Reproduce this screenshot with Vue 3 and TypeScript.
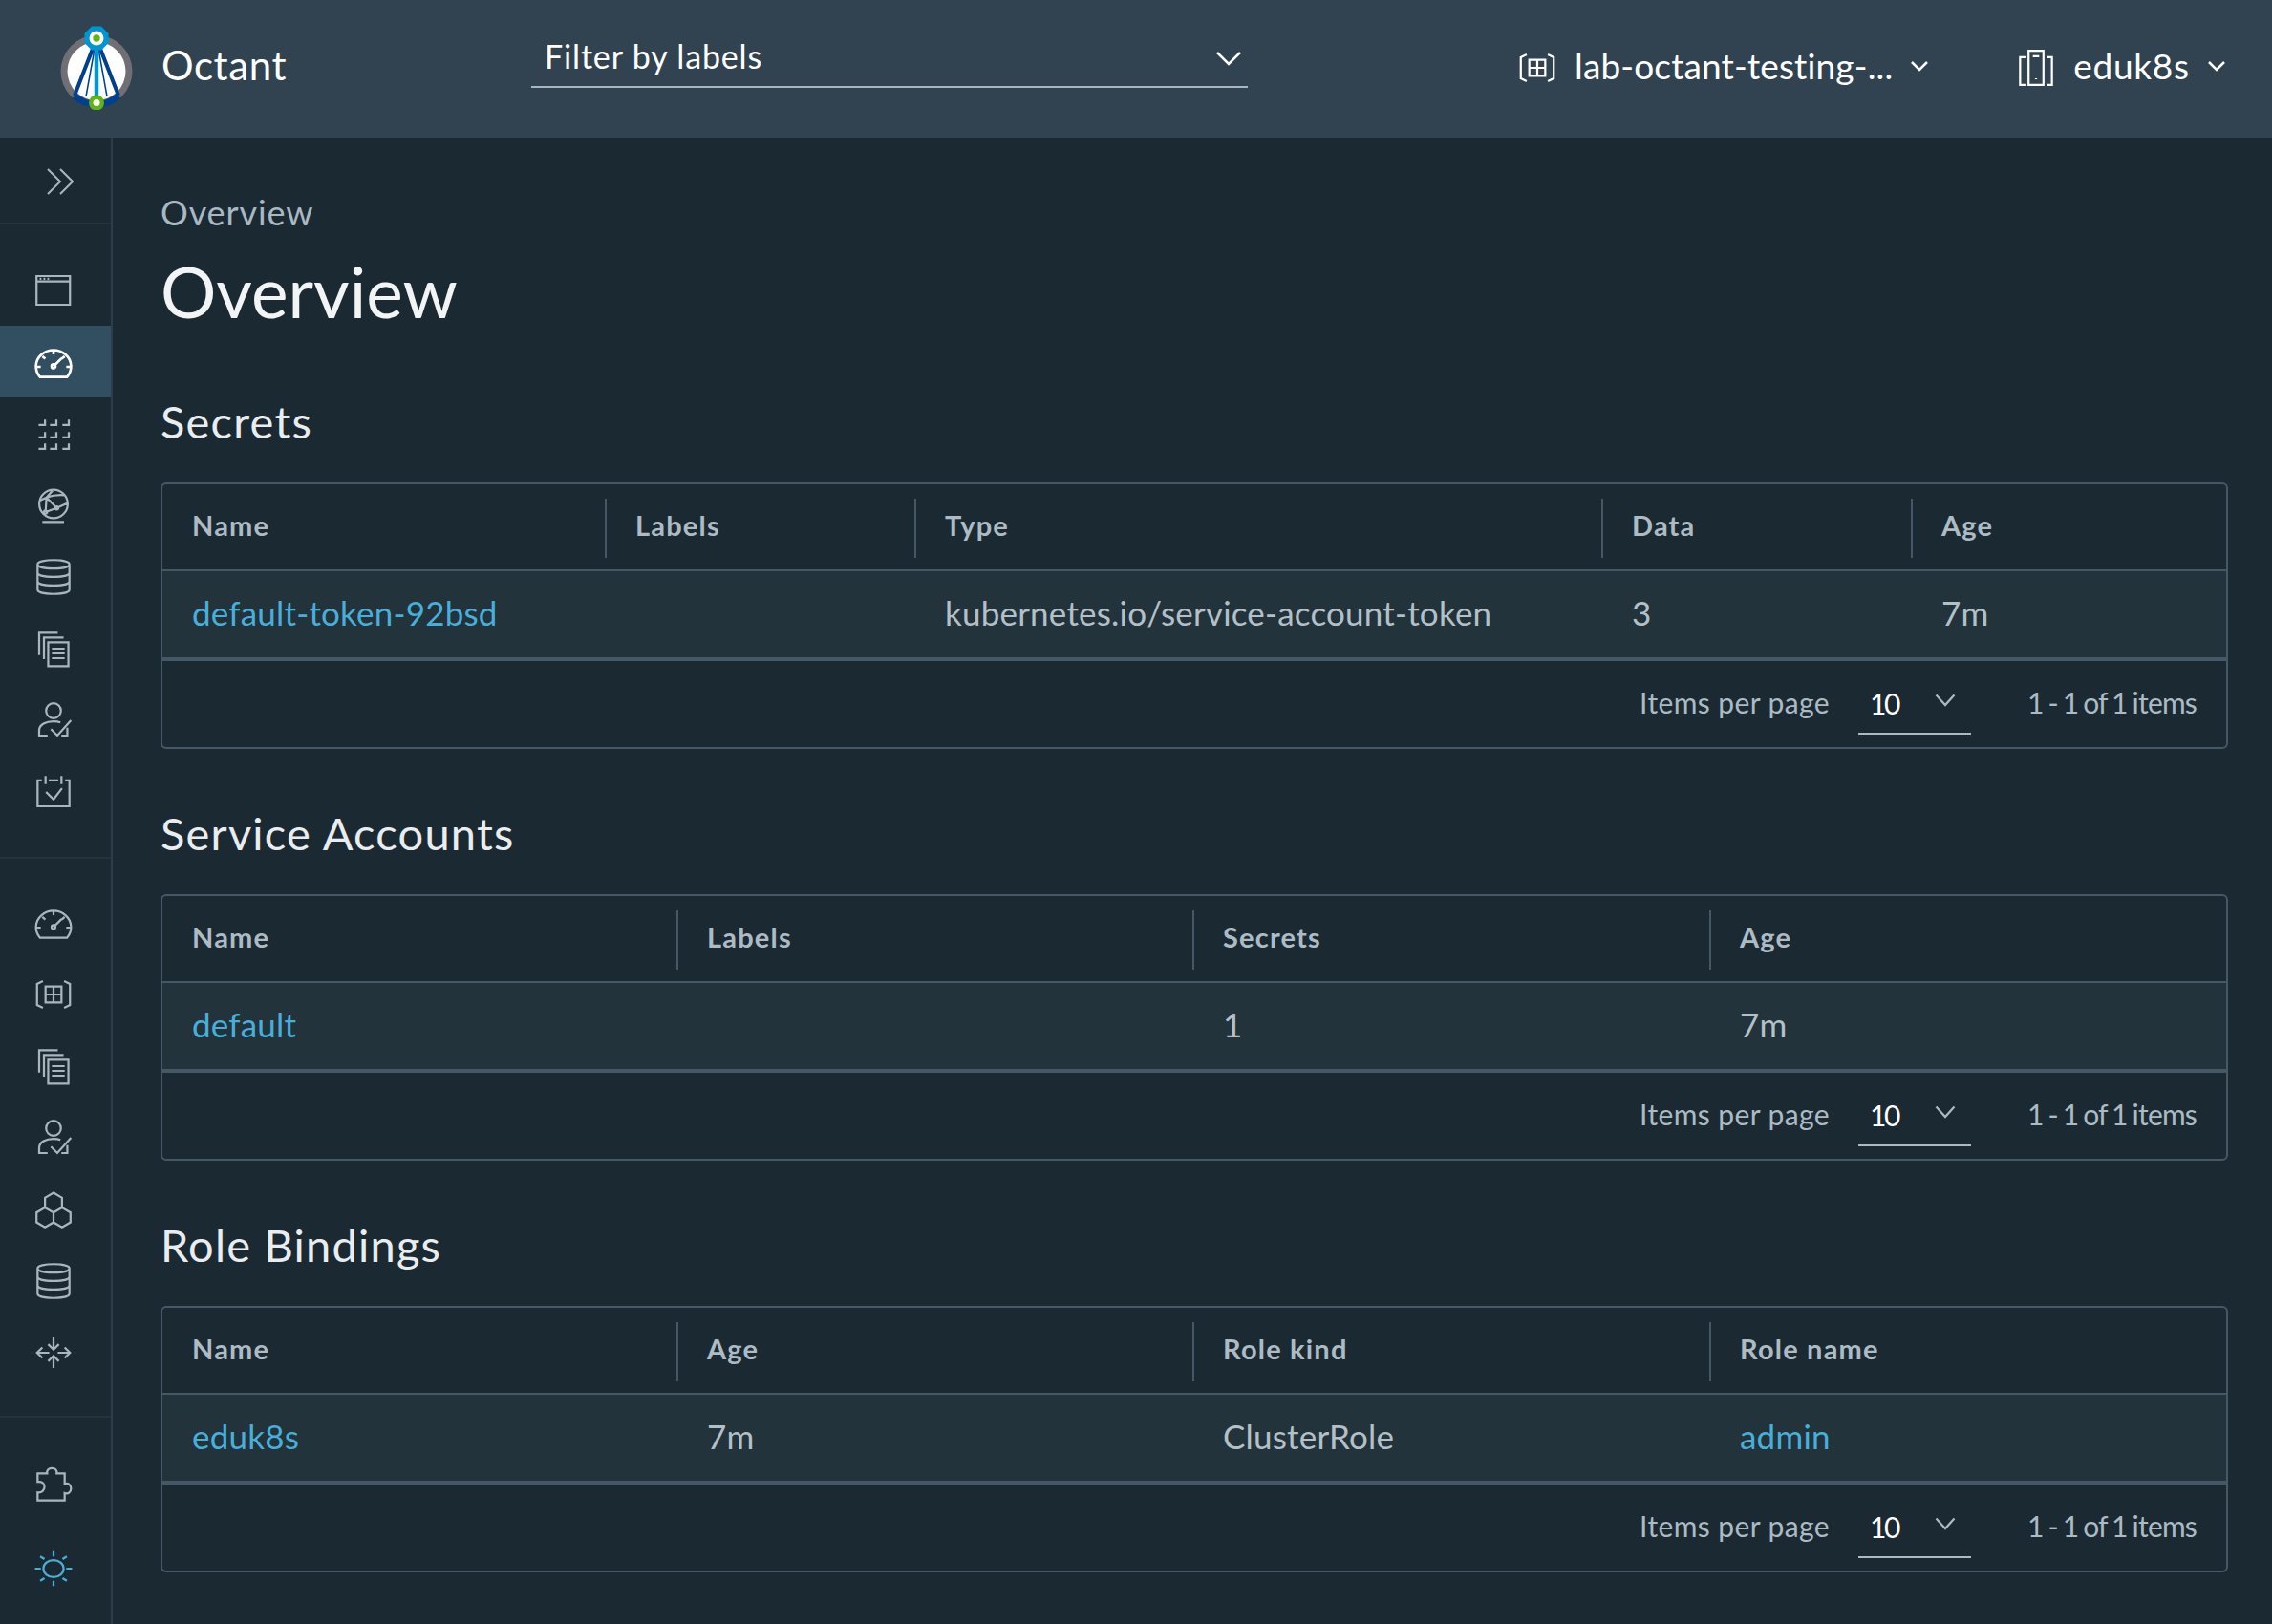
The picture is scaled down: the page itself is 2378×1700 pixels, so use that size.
<script setup lang="ts">
// Octant overview page: top bar, icon rail and three resource tables.
type Cell = { text: string; link?: boolean };
type Table = { title: string; columns: number[]; heads: string[]; row: Cell[] };

const icons: Record<string, string> = {
  application: "M2 4.5h31.5v27H2z M2 9.5h31.5 M5 7h1.6 M8.6 7h1.6 M12.2 7h1.6",
  gauge:
    "M5.2 32A16.5 15.5 0 1 1 30.8 32Z M18 6.7v4 M7.5 12.5l2.8 2.4 M28.5 12.5l-2.8 2.4 M2 22.5h4 M30 22.5h4 M18 22l7.5-7.5 M16.2 22a1.8 1.8 0 1 0 3.6 0a1.8 1.8 0 1 0-3.6 0",
  grid:
    "M4 9.8h6V4.8 M14.7 9.8h6V4.8 M26.4 9.8h6V4.8 M4 21.5h6v-5 M14.7 21.5h6v-5 M26.4 21.5h6v-5 M4 32.3h6v-5 M14.7 32.3h6v-5 M26.4 32.3h6v-5",
  globe:
    "M4.6 16.7a13.4 13.4 0 1 0 26.8 0a13.4 13.4 0 1 0-26.8 0 M7.5 33.6h20.4 M11.4 10.5L21 20.4 M21 20.4L10.5 24.3 M11.4 10.5L10.5 24.3 M21 20.4L30.9 16 M11.4 10.5L17.4 3.9 M11.4 10.5L5.1 13.5 M11.4 10.5C17 8.5 23 8 28.5 8.4 M19.5 20.4a1.5 1.5 0 1 0 3 0a1.5 1.5 0 1 0-3 0 M9 24.3a1.5 1.5 0 1 0 3 0a1.5 1.5 0 1 0-3 0",
  database:
    "M3 6c0-5.3 30-5.3 30 0v24c0 5.3-30 5.3-30 0z M3 6c0 5.3 30 5.3 30 0 M3 14c0 5.3 30 5.3 30 0 M3 22c0 5.3 30 5.3 30 0",
  docs: "M4.5 24V3H22 M9 28V7.5h18.5 M13 12h19v22.5H13z M16.5 18h12 M16.5 22.5h12 M16.5 27h12",
  userCheck:
    "M11 9a7 7 0 1 0 14 0a7 7 0 1 0-14 0 M12.4 32.4H4.5V27.5C4.5 22 11 19 18 19c2.5 0 4.7.3 6.5 1 M15.6 26.4l6 6L34.5 18 M25.4 32.4H31V25",
  calendar: "M7 7H3v24.5h30V7h-4 M13.5 7h9 M10.5 3v7.5 M25.5 3v7.5 M11 18l7 7 8-10.5",
  namespace:
    "M8 5.5L2.5 8v20L8 30.5 M28 5.5L33.5 8v20L28 30.5 M10.5 10.5h15v15h-15z M18 10.5v15 M10.5 18h15",
  hexagons:
    "M18 2.3l8 4.7v9.3l-8 4.6-8-4.6V7z M10 16.3l8 4.6v9.3l-8 4.6-8-4.6v-9.3z M26 16.3l8 4.6v9.3l-8 4.6-8-4.6v-9.3z",
  arrows:
    "M14 18H2.5 M7.5 13l-5 5 5 5 M22 18h11.5 M28.5 13l5 5-5 5 M18 3.5V15 M13 10l5 5 5-5 M18 32.5V21 M13 26l5-5 5 5",
  puzzle:
    "M3 33V25.5C7 26 9.5 23.5 9.5 20S7 15 3 15.5V7.5H12C11.5 4.5 13.5 2.5 16.5 2.5S21.5 4.5 21 7.5H28.5V17.4C32 16 34.5 18.5 34.5 21.7S32 27.5 28.5 26.1V33Z",
  sun: "M8.5 18a9.5 8 0 1 0 19 0a9.5 8 0 1 0-19 0 M18 1.5v5 M18 29.5v5 M0.5 18h5.5 M30 18h5.5 M5.5 6.5l4 2.5 M30.5 6.5l-4 2.5 M5.5 29.5l4-2.5 M30.5 29.5l-4-2.5",
  device: "M11 2h14v32H11z M15 7h6 M18 28v.8 M8 8H3v26h5 M28 8h5v26h-5",
};

const topNav = ["application", "gauge", "grid", "globe", "database", "docs", "userCheck", "calendar"];
const midNav = ["gauge", "namespace", "docs", "userCheck", "hexagons", "database", "arrows"];

const tables: Table[] = [
  {
    title: "Secrets",
    columns: [463, 324, 719, 324, 330],
    heads: ["Name", "Labels", "Type", "Data", "Age"],
    row: [
      { text: "default-token-92bsd", link: true },
      { text: "" },
      { text: "kubernetes.io/service-account-token" },
      { text: "3" },
      { text: "7m" },
    ],
  },
  {
    title: "Service Accounts",
    columns: [538, 540, 541, 541],
    heads: ["Name", "Labels", "Secrets", "Age"],
    row: [{ text: "default", link: true }, { text: "" }, { text: "1" }, { text: "7m" }],
  },
  {
    title: "Role Bindings",
    columns: [538, 540, 541, 541],
    heads: ["Name", "Age", "Role kind", "Role name"],
    row: [
      { text: "eduk8s", link: true },
      { text: "7m" },
      { text: "ClusterRole" },
      { text: "admin", link: true },
    ],
  },
];

function gridFor(table: Table) {
  return { gridTemplateColumns: table.columns.map((c) => `${c}px`).join(" ") };
}
</script>

<template>
  <div class="app">
    <header class="topbar">
      <svg class="logo" viewBox="0 0 76 88" width="76" height="88" aria-hidden="true">
        <circle cx="38" cy="47.5" r="37.5" fill="#6f6f74" />
        <circle cx="38" cy="47.5" r="30.5" fill="#fff" />
        <path d="M15 73.5A34.5 34.5 0 0 0 61 73.5" fill="none" stroke="#00408d" stroke-width="7" />
        <path d="M34 24L15 73M42 24L61 73" stroke="#00408d" stroke-width="4" fill="none" />
        <path d="M36 24L27 74M40 24L49 74" stroke="#00408d" stroke-width="1.5" fill="none" />
        <path d="M38 14V80" stroke="#0095d3" stroke-width="4.5" />
        <path d="M33 0.5h10l7.5 7.5v10L43 25.5H33L25.5 18V8z" fill="#0095d3" />
        <circle cx="38" cy="13" r="7.5" fill="#fff" />
        <circle cx="38" cy="13" r="3.7" fill="#60b515" />
        <circle cx="38" cy="80.5" r="8" fill="#60b515" />
        <circle cx="38" cy="80.5" r="3.5" fill="#fff" />
      </svg>
      <span class="brand">Octant</span>
      <div class="filter">
        <span>Filter by labels</span>
        <svg width="28" height="16" viewBox="0 0 28 16" aria-hidden="true"><path d="M2 2l12 12L26 2" /></svg>
      </div>
      <div class="context namespace">
        <svg class="icon" viewBox="0 0 36 36" aria-hidden="true"><path :d="icons.namespace" /></svg>
        <span>lab-octant-testing-...</span>
        <svg class="caret" width="18" height="11" viewBox="0 0 18 11" aria-hidden="true"><path d="M1 1l8 8 8-8" /></svg>
      </div>
      <div class="context kube">
        <svg class="icon" viewBox="0 0 36 36" aria-hidden="true"><path :d="icons.device" /></svg>
        <span>eduk8s</span>
        <svg class="caret" width="18" height="11" viewBox="0 0 18 11" aria-hidden="true"><path d="M1 1l8 8 8-8" /></svg>
      </div>
    </header>

    <div class="body">
      <nav class="rail">
        <div class="collapse">
          <svg width="28" height="28" viewBox="0 0 28 28" aria-hidden="true"><path d="M1 1l13 13L1 27M14 1l13 13-13 13" /></svg>
        </div>
        <div class="group first">
          <div v-for="(name, i) in topNav" :key="i" class="item" :class="{ active: i === 1 }">
            <svg class="icon" viewBox="0 0 36 36" aria-hidden="true"><path :d="icons[name]" /></svg>
          </div>
        </div>
        <div class="group second">
          <div v-for="(name, i) in midNav" :key="i" class="item">
            <svg class="icon" viewBox="0 0 36 36" aria-hidden="true"><path :d="icons[name]" /></svg>
          </div>
        </div>
        <div class="group third">
          <div class="item plugin">
            <svg class="icon" viewBox="0 0 36 36" aria-hidden="true"><path :d="icons.puzzle" /></svg>
          </div>
          <div class="item theme">
            <svg class="icon" viewBox="0 0 36 36" aria-hidden="true"><path :d="icons.sun" /></svg>
          </div>
        </div>
      </nav>

      <main class="content">
        <div class="crumb">Overview</div>
        <h1>Overview</h1>
        <section v-for="table in tables" :key="table.title">
          <h2>{{ table.title }}</h2>
          <div class="card">
            <div class="row head" :style="gridFor(table)">
              <div v-for="h in table.heads" :key="h" class="th">{{ h }}</div>
            </div>
            <div class="row data" :style="gridFor(table)">
              <div v-for="(c, i) in table.row" :key="i" class="td" :class="{ link: c.link }">{{ c.text }}</div>
            </div>
            <div class="foot">
              <span class="muted items">Items per page</span>
              <div class="pager">
                <span>10</span>
                <svg width="22" height="14" viewBox="0 0 22 14" aria-hidden="true"><path d="M1.5 1.5L11 12l9.5-10.5" /></svg>
              </div>
              <span class="muted range">1 - 1 of 1 items</span>
            </div>
          </div>
        </section>
      </main>
    </div>
  </div>
</template>

<style scoped>
.app {
  display: flex;
  flex-direction: column;
  min-height: 1700px;
  background: #1b2a32;
  color: #fff;
  font-family: Lato, "Liberation Sans", sans-serif;
}
.topbar {
  display: flex;
  align-items: center;
  height: 144px;
  background: #314351;
  padding-left: 63px;
  box-sizing: border-box;
}
.logo {
  flex: none;
  margin-top: -2px;
}
.brand {
  margin-left: 30px;
  width: 387px;
  padding-bottom: 9px;
  font-size: 42px;
  letter-spacing: 0.6px;
}
.filter {
  display: flex;
  justify-content: space-between;
  align-items: center;
  align-self: flex-end;
  width: 750px;
  height: 54px;
  margin-bottom: 52px;
  padding: 0 6px 0 14px;
  box-sizing: border-box;
  border-bottom: 2px solid #a9b6be;
  font-size: 34px;
  letter-spacing: 0.85px;
}
.filter span {
  padding-bottom: 12px;
}
.filter svg {
  margin-bottom: 6px;
}
.filter svg path,
.caret path {
  fill: none;
  stroke: #fff;
  stroke-width: 2.5;
}
.context {
  display: flex;
  align-items: center;
  padding-bottom: 3px;
  font-size: 37px;
  letter-spacing: 0.15px;
}
.context span {
  padding-bottom: 5px;
}
.context .icon {
  width: 40px;
  height: 40px;
  stroke: #fff;
}
.namespace {
  margin-left: 283px;
  gap: 19px;
}
.kube {
  margin-left: 93px;
  gap: 19px;
}
.kube span {
  letter-spacing: 0.7px;
}
.caret {
  margin-bottom: 2px;
}
.body {
  display: flex;
  flex: 1;
}
.rail {
  flex: none;
  width: 118px;
  box-sizing: border-box;
  border-right: 2px solid #2c3d4a;
}
.collapse {
  display: flex;
  align-items: center;
  justify-content: center;
  height: 91px;
  padding-left: 10px;
  padding-top: 2px;
  box-sizing: border-box;
  border-bottom: 2px solid #24333d;
}
.collapse path {
  fill: none;
  stroke: #a9b6be;
  stroke-width: 2;
}
.group {
  box-sizing: border-box;
}
.first {
  padding: 31px 0;
  border-bottom: 2px solid #24333d;
}
.second {
  padding: 29px 0;
  border-bottom: 2px solid #24333d;
}
.third {
  padding-top: 32px;
}
.item {
  display: flex;
  align-items: center;
  justify-content: center;
  height: 75px;
  padding-right: 4px;
  box-sizing: border-box;
}
.item.active {
  background: #324f61;
}
.icon {
  width: 40px;
  height: 40px;
  fill: none;
  stroke: #a9b6be;
  stroke-width: 2;
}
.item.active .icon {
  stroke: #fff;
  stroke-width: 2.4;
}
.theme {
  margin-top: 13px;
}
.theme .icon {
  stroke: #49afd9;
}
.content {
  flex: 1;
  min-width: 0;
  padding: 58px 46px 0 50px;
}
.crumb {
  font-size: 36px;
  line-height: 40px;
  letter-spacing: 0.9px;
  color: #a9b8c2;
}
h1 {
  margin: 18px 0 61px;
  font-size: 73px;
  line-height: 90px;
  font-weight: 400;
  color: #f2f4f5;
}
h2 {
  margin: 0 0 34px;
  font-size: 47px;
  line-height: 60px;
  font-weight: 400;
  letter-spacing: 1.2px;
  color: #eaedf0;
}
section + section {
  margin-top: 58px;
}
.card {
  width: 2164px;
  height: 279px;
  box-sizing: border-box;
  border: 2px solid #465766;
  border-radius: 6px;
  overflow: hidden;
}
.row {
  display: grid;
  box-sizing: border-box;
}
.head {
  height: 91px;
  border-bottom: 2px solid #465766;
  padding-top: 15px;
  padding-bottom: 12px;
}
.th {
  display: flex;
  align-items: center;
  padding-left: 30px;
  padding-bottom: 7px;
  border-left: 2px solid #465766;
  font-size: 29px;
  font-weight: 700;
  color: #adbbc4;
  letter-spacing: 1.2px;
}
.th:first-child {
  padding-left: 31px;
  border-left: none;
}
.data {
  height: 94px;
  background: #22333b;
  border-bottom: 4px solid #465766;
}
.td {
  display: flex;
  align-items: center;
  padding-left: 32px;
  padding-bottom: 4px;
  font-size: 35px;
  letter-spacing: 0.2px;
  color: #b4c0c8;
}
.td:first-child {
  padding-left: 31px;
}
.td.link {
  color: #49afd9;
}
.foot {
  display: flex;
  justify-content: flex-end;
  align-items: center;
  height: 90px;
  padding-right: 31px;
  padding-bottom: 4px;
  box-sizing: border-box;
  font-size: 30px;
}
.muted {
  color: #acbac3;
}
.items {
  letter-spacing: 0.4px;
}
.range {
  letter-spacing: -0.8px;
  word-spacing: -2px;
}
.pager {
  display: flex;
  align-items: center;
  justify-content: space-between;
  box-sizing: border-box;
  width: 118px;
  height: 60px;
  margin: 8px 59px 0 30px;
  padding: 0 16px 4px 12px;
  border-bottom: 2px solid #acbac3;
  color: #fff;
  letter-spacing: -2.5px;
}
.pager svg {
  margin-bottom: 6px;
}
.pager path {
  fill: none;
  stroke: #acbac3;
  stroke-width: 2.2;
}
</style>

<style>
html,
body {
  background: #1b2a32;
}
</style>
